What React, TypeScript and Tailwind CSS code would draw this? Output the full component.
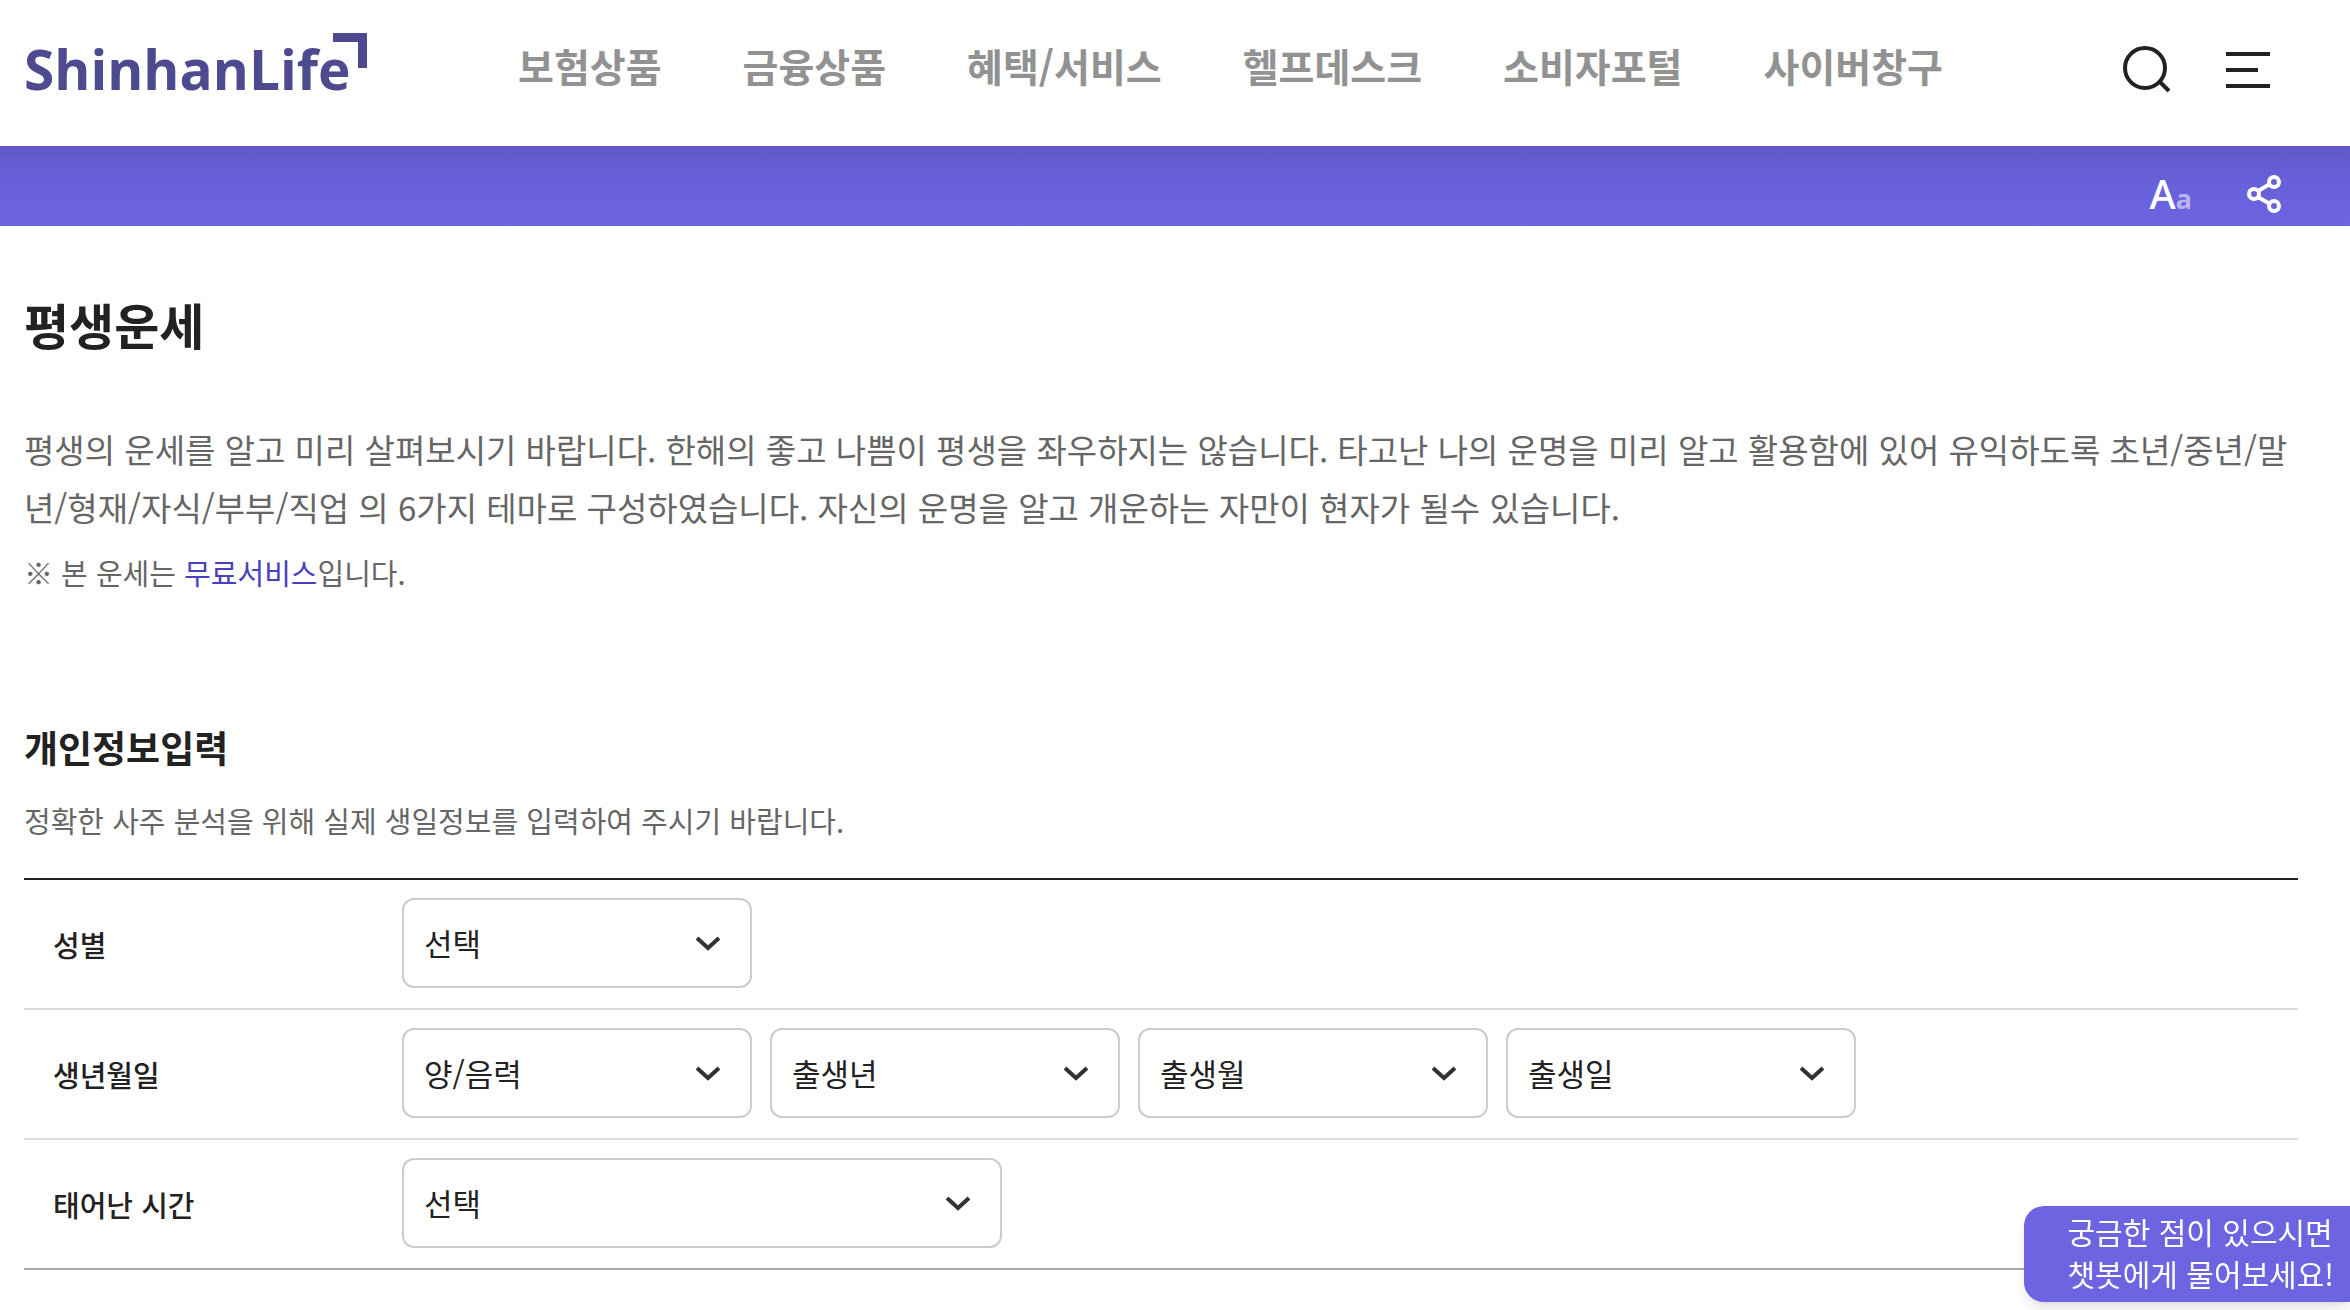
const navItems = ['보험상품', '금융상품', '혜택/서비스', '헬프데스크', '소비자포털', '사이버창구']

type SelectField = {
  id: string
  label: string
  placeholder: string
  options: string[]
  wide?: boolean
}

type FormRow = {
  title: string
  fields: SelectField[]
}

const formRows: FormRow[] = [
  {
    title: '성별',
    fields: [{ id: 'gender', label: '성별', placeholder: '선택', options: ['남자', '여자'] }],
  },
  {
    title: '생년월일',
    fields: [
      { id: 'calendar', label: '양/음력', placeholder: '양/음력', options: ['양력', '음력'] },
      {
        id: 'year',
        label: '출생년',
        placeholder: '출생년',
        options: Array.from({ length: 80 }, (_, i) => `${1945 + i}년`),
      },
      {
        id: 'month',
        label: '출생월',
        placeholder: '출생월',
        options: Array.from({ length: 12 }, (_, i) => `${i + 1}월`),
      },
      {
        id: 'day',
        label: '출생일',
        placeholder: '출생일',
        options: Array.from({ length: 31 }, (_, i) => `${i + 1}일`),
      },
    ],
  },
  {
    title: '태어난 시간',
    fields: [
      {
        id: 'time',
        label: '태어난 시간',
        placeholder: '선택',
        options: Array.from({ length: 24 }, (_, i) => `${i}시`),
        wide: true,
      },
    ],
  },
]

const Logo = () => (
  <a
    href="#"
    className="relative block w-[343px] font-['Open_Sans',sans-serif] text-[55px] font-bold leading-[66px] text-[#4d4a8f]"
  >
    ShinhanLife
    <svg className="absolute -top-[3px] right-0" width="34" height="35" viewBox="0 0 34 35" fill="currentColor" aria-hidden="true">
      <path d="M0 0h34v35h-9V9H0z" />
    </svg>
  </a>
)

const Header = () => (
  <header className="flex h-[146px] items-start justify-between bg-white pl-6 pr-20 pt-9">
    <div className="flex items-start">
      <Logo />
      <nav className="ml-[151px]">
        <ul className="flex gap-[81px]">
          {navItems.map((item) => (
            <li key={item}>
              <a href="#" className="block whitespace-nowrap text-[39px] font-bold leading-[58px] text-[#929292]">
                {item}
              </a>
            </li>
          ))}
        </ul>
      </nav>
    </div>
    <div className="flex items-center gap-[54px] pt-2">
      <button type="button" aria-label="검색">
        <svg width="50" height="50" viewBox="0 0 50 50" fill="none" stroke="#222" strokeWidth="4" aria-hidden="true">
          <circle cx="23" cy="24" r="20" />
          <path d="M38 38l9 9" />
        </svg>
      </button>
      <button type="button" aria-label="전체메뉴">
        <svg width="44" height="50" viewBox="0 0 44 50" fill="#222" aria-hidden="true">
          <path d="M0 8h44v4H0zM0 24h32v4H0zM0 40h44v4H0z" />
        </svg>
      </button>
    </div>
  </header>
)

const UtilityBar = () => (
  <div className="flex h-20 items-end justify-end gap-[54px] bg-linear-to-b from-[#6159c8] via-[#6960dc] to-[#6c64e1] pb-2 pr-[68px]">
    <button type="button" aria-label="글자 크기" className="flex items-baseline font-['Noto_Sans',sans-serif] leading-[38px] text-white">
      <span className="text-[40px] font-medium">A</span>
      <span className="text-[27px] font-bold text-[#b9b4ef]">a</span>
    </button>
    <button type="button" aria-label="공유하기">
      <svg width="36" height="48" viewBox="0 0 36 48" fill="none" stroke="#fff" strokeWidth="4" aria-hidden="true">
        <circle cx="8" cy="24" r="5" />
        <circle cx="28" cy="12" r="5" />
        <circle cx="28" cy="36" r="5" />
        <path d="M12 21l12-7M12 27l12 7" />
      </svg>
    </button>
  </div>
)

const SelectBox = ({ field }: { field: SelectField }) => (
  <div className={`relative ${field.wide ? 'w-[600px]' : 'w-[350px]'}`}>
    <select
      id={field.id}
      aria-label={field.label}
      defaultValue=""
      className="block h-[90px] w-full appearance-none rounded-xl border-2 border-[#ccc] bg-white pl-5 pr-16 text-[31px] text-[#222]"
    >
      <option value="">{field.placeholder}</option>
      {field.options.map((option) => (
        <option key={option} value={option}>
          {option}
        </option>
      ))}
    </select>
    <svg
      className="pointer-events-none absolute right-[31px] top-[38px]"
      width="26"
      height="16"
      viewBox="0 0 26 16"
      fill="none"
      stroke="#333"
      strokeWidth="4"
      aria-hidden="true"
    >
      <path d="M2 2l11 10L24 2" />
    </svg>
  </div>
)

const PersonalInfoForm = () => (
  <section className="mt-[123px]">
    <h2 className="text-[37px] font-bold leading-[56px] text-[#222]">개인정보입력</h2>
    <p className="mt-[21px] text-[29px] leading-[48px] text-[#666]">정확한 사주 분석을 위해 실제 생일정보를 입력하여 주시기 바랍니다.</p>
    <table className="mt-[34px] w-full border-collapse border-b-2 border-t-2 border-b-[#aaa] border-t-[#222]">
      <tbody>
        {formRows.map((row) => (
          <tr key={row.title} className="border-t-2 border-[#ddd] first:border-t-[#222]">
            <th scope="row" className="w-[378px] pl-[29px] pt-0.5 text-left text-[29px] font-medium text-[#222]">
              <label htmlFor={row.fields[0].id}>{row.title}</label>
            </th>
            <td className="pb-5 pt-[18px]">
              <div className="flex gap-[18px]">
                {row.fields.map((field) => (
                  <SelectBox key={field.id} field={field} />
                ))}
              </div>
            </td>
          </tr>
        ))}
      </tbody>
    </table>
  </section>
)

const App = () => {
  return (
    <div lang="ko" className="bg-white font-['Noto_Sans_CJK_KR',sans-serif]">
      <Header />
      <UtilityBar />
      <main className="pl-6 pr-[52px] pt-[62px]">
        <h1 className="text-[49px] font-bold leading-[72px] text-[#222]">평생운세</h1>
        <p className="mt-[60px] text-[33px] leading-[58px] text-[#666]">
          평생의 운세를 알고 미리 살펴보시기 바랍니다. 한해의 좋고 나쁨이 평생을 좌우하지는 않습니다. 타고난 나의
          운명을 미리 알고 활용함에 있어 유익하도록 초년/중년/말년/형재/자식/부부/직업 의 6가지 테마로
          구성하였습니다. 자신의 운명을 알고 개운하는 자만이 현자가 될수 있습니다.
        </p>
        <p className="mt-3 text-[29px] leading-[48px] text-[#666]">
          ※ 본 운세는 <span className="text-[#4b3fc0]">무료서비스</span>입니다.
        </p>
        <PersonalInfoForm />
      </main>
      <button
        type="button"
        className="fixed bottom-2 right-0 h-24 rounded-l-[20px] bg-[#6c64e1] pb-1 pl-11 pr-4 text-left text-[30px] leading-[42px] text-white shadow-lg"
      >
        궁금한 점이 있으시면
        <br />
        챗봇에게 물어보세요!
      </button>
    </div>
  )
}

export default App
